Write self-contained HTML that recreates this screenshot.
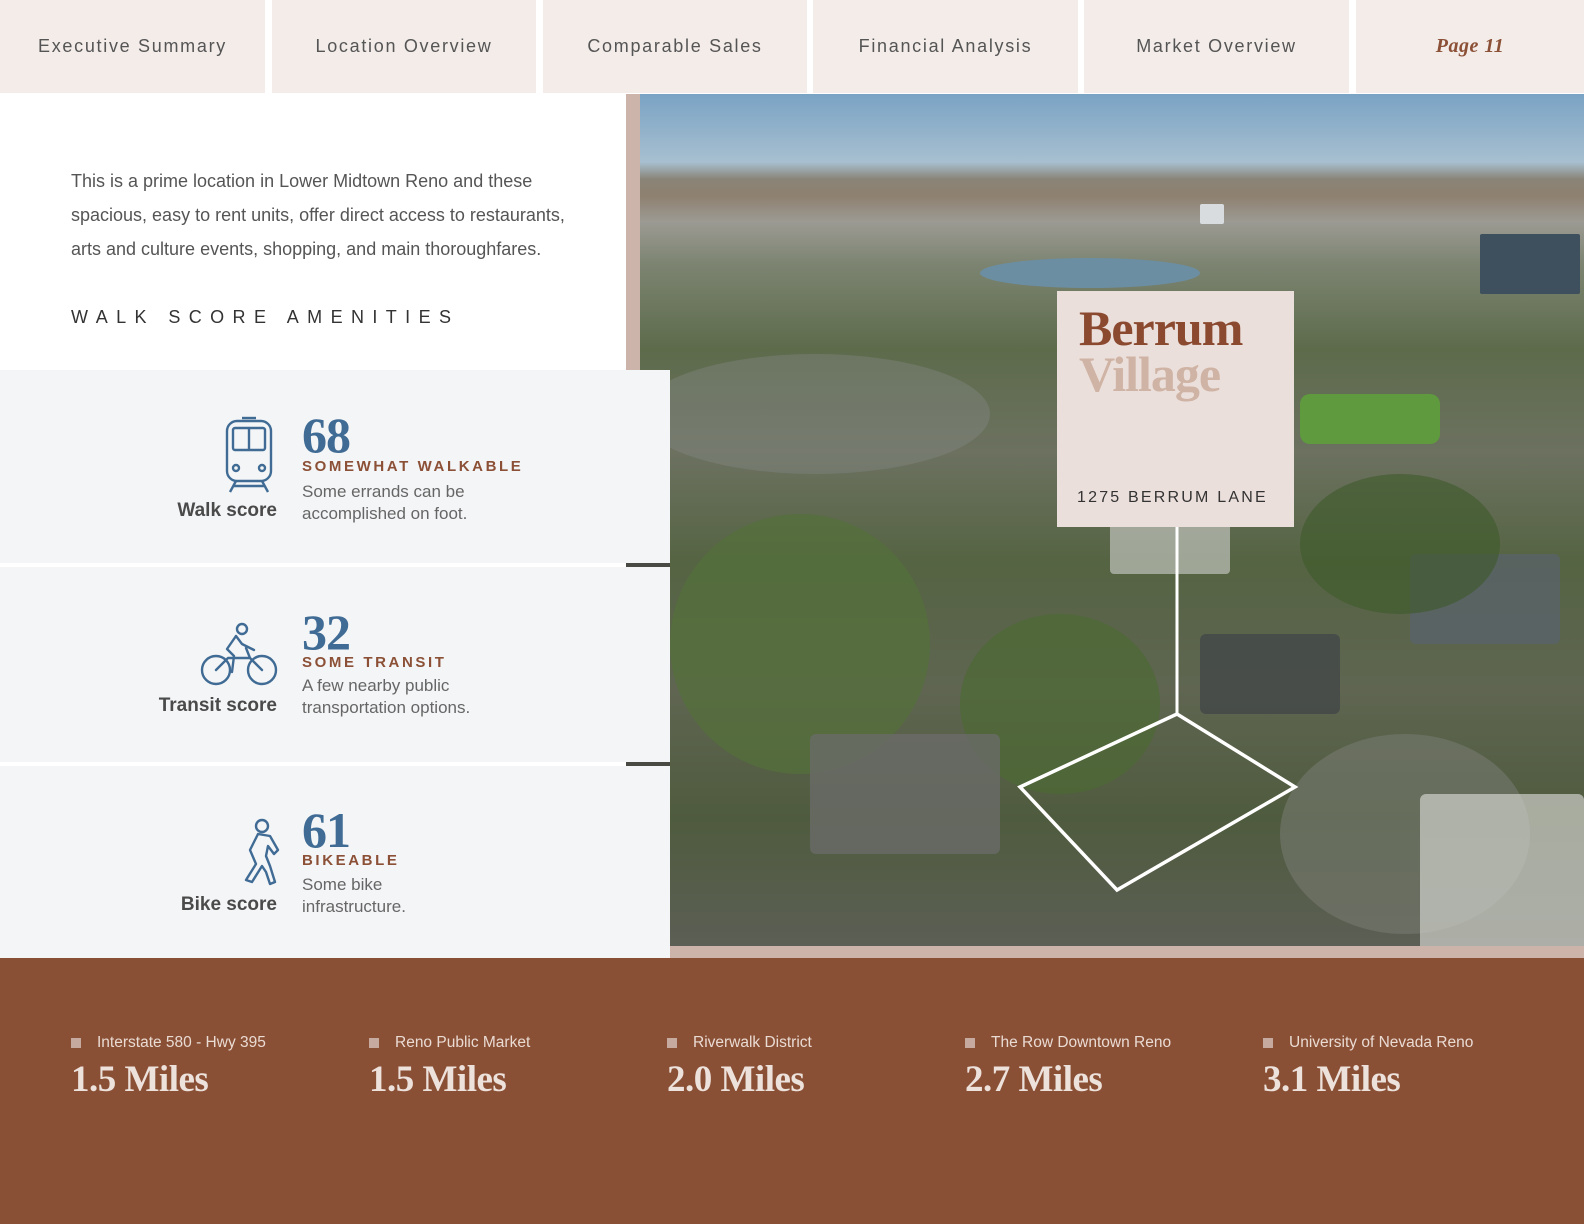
<!DOCTYPE html>
<html><head><meta charset="utf-8"><style>
*{margin:0;padding:0;box-sizing:border-box}
body{width:1584px;height:1224px;position:relative;background:#fff;font-family:"Liberation Sans",sans-serif;overflow:hidden}
.tab{position:absolute;top:0;height:93px;background:#f3ece9;color:#555;font-size:18px;letter-spacing:1.7px;display:flex;align-items:center;justify-content:center}
.photo{position:absolute;left:640px;top:94px;width:944px;height:852px;overflow:hidden;
background:linear-gradient(180deg,#7aa3c4 0%,#a7bfd0 8%,#8a8478 10%,#8e8170 12%,#9c9a93 15%,#7c8471 20%,#5d6b4b 30%,#6c7160 42%,#556443 55%,#5f6551 70%,#4f5b3e 85%,#5c5f55 100%)}
.blob{position:absolute;border-radius:50%}
.panel{position:absolute;left:0;width:670px;background:#f4f5f7}
.num{position:absolute;left:302px;font-family:"Liberation Serif",serif;font-weight:bold;font-size:50px;color:#3f6b94;line-height:1;letter-spacing:-1px}
.lab{position:absolute;left:302px;font-size:15px;font-weight:bold;letter-spacing:2.6px;color:#8b5036}
.desc{position:absolute;left:302px;font-size:17px;color:#666;line-height:22px}
.sl{position:absolute;left:0;width:277px;text-align:right;font-size:19px;font-weight:bold;color:#4a4a4a}
.ico{position:absolute}
.bot{position:absolute;left:0;top:958px;width:1584px;height:266px;background:#8a5036}
.it{position:absolute;top:1034px;color:#eadbd3}
.it .t{font-size:15.5px;padding-left:26px;position:relative;color:#eadbd3}
.it .t:before{content:"";position:absolute;left:0;top:4px;width:10px;height:10px;background:#c6aaa0}
.it .m{font-family:"Liberation Serif",serif;font-weight:bold;font-size:37px;margin-top:6px;color:#ede1db;letter-spacing:-0.5px}
</style></head><body>
<div class="tab" style="left:0;width:265px">Executive Summary</div>
<div class="tab" style="left:272px;width:264px">Location Overview</div>
<div class="tab" style="left:543px;width:264px">Comparable Sales</div>
<div class="tab" style="left:813px;width:265px">Financial Analysis</div>
<div class="tab" style="left:1084px;width:265px">Market Overview</div>
<div class="tab" style="left:1356px;width:228px;font-family:'Liberation Serif',serif;font-style:italic;font-weight:bold;color:#8b5036;font-size:20px;letter-spacing:0.5px">Page 11</div>

<div style="position:absolute;left:626px;top:94px;width:14px;height:852px;background:#cdb4aa"></div>
<div style="position:absolute;left:670px;top:946px;width:914px;height:12px;background:#cdb4aa"></div>

<div class="photo">
 <div class="blob" style="left:340px;top:164px;width:220px;height:30px;background:#6c8ea3"></div>
 <div class="blob" style="left:840px;top:140px;width:100px;height:60px;background:#3e4f5d;border-radius:2px"></div>
 <div class="blob" style="left:560px;top:110px;width:24px;height:20px;background:#d9dcdf;border-radius:2px"></div>
 <div class="blob" style="left:660px;top:300px;width:140px;height:50px;background:#5f9a3e;border-radius:10px"></div>
 <div class="blob" style="left:30px;top:420px;width:260px;height:260px;background:#54703a;opacity:.7"></div>
 <div class="blob" style="left:0;top:260px;width:350px;height:120px;background:#8a8d8c;opacity:.35"></div>
 <div class="blob" style="left:320px;top:520px;width:200px;height:180px;background:#4d6a34;opacity:.7"></div>
 <div class="blob" style="left:170px;top:640px;width:190px;height:120px;background:#6a6c68;border-radius:6px;opacity:.8"></div>
 <div class="blob" style="left:640px;top:640px;width:250px;height:200px;background:#77796f;opacity:.6"></div>
 <div class="blob" style="left:780px;top:700px;width:164px;height:160px;background:#cfd0cb;border-radius:6px;opacity:.7"></div>
 <div class="blob" style="left:560px;top:540px;width:140px;height:80px;background:#3f4347;border-radius:6px;opacity:.7"></div>
 <div class="blob" style="left:770px;top:460px;width:150px;height:90px;background:#5a6274;border-radius:6px;opacity:.6"></div>
 <div class="blob" style="left:470px;top:420px;width:120px;height:60px;background:#d0d2cf;border-radius:4px;opacity:.6"></div>
 <div class="blob" style="left:660px;top:380px;width:200px;height:140px;background:#3d5a2a;opacity:.6"></div>
</div>
<svg style="position:absolute;left:0;top:0" width="1584" height="1224">
 <line x1="1177" y1="527" x2="1177" y2="714" stroke="#fff" stroke-width="3"/>
 <polygon points="1020,787 1177,714 1295,787 1117,890" fill="none" stroke="#fff" stroke-width="3.5"/>
</svg>
<div style="position:absolute;left:1057px;top:291px;width:237px;height:236px;background:#ebdfdb">
 <div style="position:absolute;left:22px;top:14px;font-family:'Liberation Serif',serif;font-weight:bold;font-size:50px;line-height:46px;color:#8b4a30;letter-spacing:-1px">Berrum</div>
 <div style="position:absolute;left:22px;top:60px;font-family:'Liberation Serif',serif;font-weight:bold;font-size:50px;line-height:46px;color:#cfb3a4;letter-spacing:-1px">Village</div>
 <div style="position:absolute;left:20px;top:198px;font-size:16px;letter-spacing:2.2px;color:#333">1275 BERRUM LANE</div>
</div>

<div style="position:absolute;left:71px;top:164px;width:524px;font-size:18px;line-height:34px;color:#555">This is a prime location in Lower Midtown Reno and these spacious, easy to rent units, offer direct access to restaurants, arts and culture events, shopping, and main thoroughfares.</div>
<div style="position:absolute;left:71px;top:307px;font-size:18px;letter-spacing:8.4px;color:#333">WALK SCORE AMENITIES</div>

<div class="panel" style="top:370px;height:193px"></div>
<div class="panel" style="top:567px;height:195px"></div>
<div class="panel" style="top:766px;height:192px"></div>
<div style="position:absolute;left:626px;top:563px;width:44px;height:4px;background:#4a4a45"></div>
<div style="position:absolute;left:626px;top:762px;width:44px;height:4px;background:#4a4a45"></div>

<svg class="ico" style="left:222px;top:416px" width="54" height="78" viewBox="0 0 54 78" fill="none" stroke="#3f6b94" stroke-width="2.4">
 <rect x="5" y="5" width="44" height="60" rx="10"/><line x1="20" y1="2" x2="34" y2="2"/>
 <rect x="11" y="12" width="32" height="22" rx="2"/><line x1="27" y1="12" x2="27" y2="34"/>
 <circle cx="14" cy="52" r="3"/><circle cx="40" cy="52" r="3"/>
 <line x1="14" y1="65" x2="8" y2="76"/><line x1="40" y1="65" x2="46" y2="76"/><line x1="12" y1="70" x2="42" y2="70"/>
</svg>
<div class="num" style="top:410px">68</div>
<div class="lab" style="top:458px">SOMEWHAT WALKABLE</div>
<div class="desc" style="top:481px">Some errands can be<br>accomplished on foot.</div>
<div class="sl" style="top:500px">Walk score</div>

<svg class="ico" style="left:200px;top:622px" width="78" height="66" viewBox="0 0 78 66" fill="none" stroke="#3f6b94" stroke-width="2.4" stroke-linejoin="round" stroke-linecap="round">
 <circle cx="42" cy="7" r="5"/><circle cx="16" cy="48" r="14"/><circle cx="62" cy="48" r="14"/>
 <path d="M36 14 L27 27 L34 34 L32 50 M36 14 L42 22 L54 28 M16 48 L28 36 L50 36 L62 48 M46 26 L50 36"/>
</svg>
<div class="num" style="top:607px">32</div>
<div class="lab" style="top:654px">SOME TRANSIT</div>
<div class="desc" style="top:675px">A few nearby public<br>transportation options.</div>
<div class="sl" style="top:695px">Transit score</div>

<svg class="ico" style="left:240px;top:818px" width="40" height="70" viewBox="0 0 40 70" fill="none" stroke="#3f6b94" stroke-width="2.4" stroke-linejoin="round" stroke-linecap="round">
 <circle cx="22" cy="8" r="6"/>
 <path d="M18 16 L10 32 L16 46 L6 62 L12 64 L22 48 L26 54 L30 66 L35 64 L30 48 L26 38 L28 28 L34 36 L38 32 L30 18 Z"/>
</svg>
<div class="num" style="top:805px">61</div>
<div class="lab" style="top:852px">BIKEABLE</div>
<div class="desc" style="top:874px">Some bike<br>infrastructure.</div>
<div class="sl" style="top:894px">Bike score</div>

<div class="bot"></div>
<div class="it" style="left:71px"><div class="t">Interstate 580 - Hwy 395</div><div class="m">1.5 Miles</div></div>
<div class="it" style="left:369px"><div class="t">Reno Public Market</div><div class="m">1.5 Miles</div></div>
<div class="it" style="left:667px"><div class="t">Riverwalk District</div><div class="m">2.0 Miles</div></div>
<div class="it" style="left:965px"><div class="t">The Row Downtown Reno</div><div class="m">2.7 Miles</div></div>
<div class="it" style="left:1263px"><div class="t">University of Nevada Reno</div><div class="m">3.1 Miles</div></div>
</body></html>
